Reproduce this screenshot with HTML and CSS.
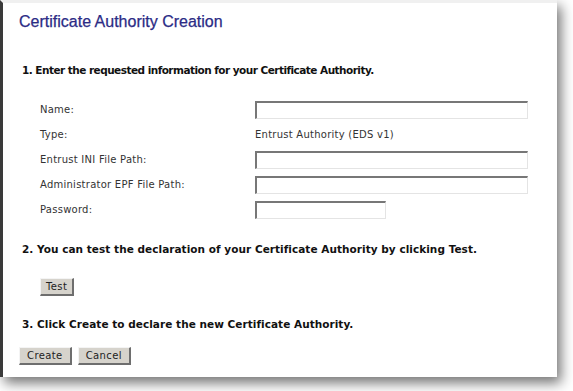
FILE: index.html
```html
<!DOCTYPE html>
<html>
<head>
<meta charset="utf-8">
<link rel="stylesheet" href="styles.css">
</head>
<body>
<div class="stage">
  <div class="panel">
    <h1 class="title">Certificate Authority Creation</h1>
    <p class="step step1">1. Enter the requested information for your Certificate Authority.</p>
    <div class="form">
      <div class="row"><span class="label">Name:</span><span class="field"><span class="input wide"></span></span></div>
      <div class="row"><span class="label">Type:</span><span class="field value">Entrust Authority (EDS v1)</span></div>
      <div class="row"><span class="label">Entrust INI File Path:</span><span class="field"><span class="input wide"></span></span></div>
      <div class="row"><span class="label">Administrator EPF File Path:</span><span class="field"><span class="input wide"></span></span></div>
      <div class="row"><span class="label">Password:</span><span class="field"><span class="input short"></span></span></div>
    </div>
    <p class="step step2">2. You can test the declaration of your Certificate Authority by clicking Test.</p>
    <div class="test-row"><span class="btn btn-test">Test</span></div>
    <p class="step step3">3. Click Create to declare the new Certificate Authority.</p>
    <div class="actions"><span class="btn">Create</span><span class="btn">Cancel</span></div>
  </div>
</div>
</body>
</html>
```
FILE: styles.css
```css
html, body { margin: 0; padding: 0; background: #ffffff; }
body { width: 573px; height: 391px; overflow: hidden; }
.stage { padding: 0; }
.panel {
  width: 554px;
  height: 374px;
  background: #ffffff;
  border-left: 3px solid #3a3a3a;
  border-top: 3px solid #f0f0f0;
  box-shadow: 4px 6px 12px rgba(0,0,0,0.55);
  box-sizing: content-box;
  font-family: "DejaVu Sans", Verdana, sans-serif;
  color: #333333;
  position: relative;
}
.title {
  margin: 0;
  padding: 10px 0 0 16px;
  font-family: "Liberation Sans", Arial, sans-serif;
  font-weight: normal;
  font-size: 16px;
  color: #2b2b85;
  line-height: 18px;
  -webkit-text-stroke: 0.25px #2b2b85;
}
.step {
  margin: 0;
  padding-left: 19px;
  font-size: 10.5px;
  font-weight: bold;
  color: #111111;
  line-height: 14px;
  letter-spacing: 0.04px;
}
.step1 { margin-top: 32px; letter-spacing: -0.53px; }
.form { margin-top: 20px; padding-left: 37px; }
.row { display: flex; align-items: center; height: 25px; }
.label { width: 215px; font-size: 10px; color: #333; letter-spacing: 0.25px; }
.value { font-size: 10px; color: #333; letter-spacing: 0.25px; }
.input {
  display: block;
  height: 15px;
  border-style: solid;
  border-width: 2px 1px 1px 2px;
  border-color: #777 #e4e4e4 #e4e4e4 #777;
  background: #fff;
}
.wide { width: 270px; }
.short { width: 128px; }
.step2 { margin-top: 20px; }
.test-row { margin-top: 19px; padding-left: 37px; }
.btn {
  display: inline-block;
  background: #d6d3cc;
  border-style: solid;
  border-width: 1px 2px 2px 1px;
  border-color: #f4f4f4 #6e6e6e #6e6e6e #f4f4f4;
  font-size: 10px;
  color: #222;
  padding: 0 7px;
  line-height: 15px;
  letter-spacing: 0.4px;
}
.btn-test { padding: 0 5px; }
.step3 { margin-top: 21px; }
.actions { margin-top: 16px; padding-left: 16px; display: flex; gap: 6px; }
```
